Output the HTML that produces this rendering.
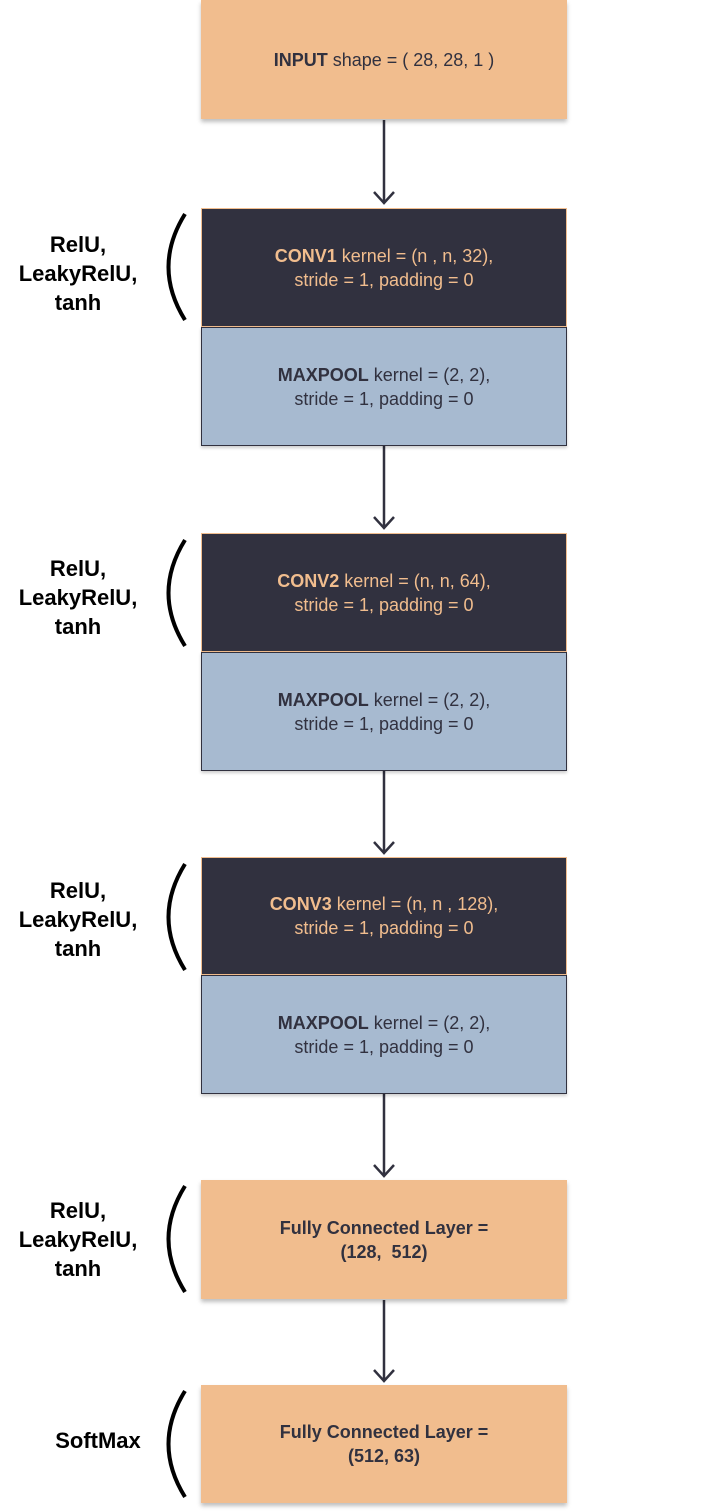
<!DOCTYPE html>
<html><head><meta charset="utf-8"><style>
body{margin:0;width:724px;height:1512px;background:#fff;position:relative;font-family:"Liberation Sans",sans-serif;overflow:hidden}
.b{position:absolute;left:201px;width:366px;display:flex;align-items:center;justify-content:center;text-align:center;font-size:18px;line-height:24px;box-sizing:border-box}
.o{background:#f1bd8e;color:#31313f;box-shadow:0 3px 4px rgba(0,0,0,.25)}
.d{background:#31313f;color:#f1bd8e;border:1px solid #f1bd8e}
.m{background:#a7bad0;color:#31313f;border:1px solid #31313f;box-shadow:0 2px 3px rgba(0,0,0,.2)}
.l{position:absolute;left:0;width:156px;text-align:center;font-weight:bold;font-size:22px;line-height:29px;color:#000}
svg{position:absolute;left:0;top:0}
</style></head><body>
<svg width="724" height="1512">
<g stroke="#31313f" stroke-width="2.5" fill="none">
<path d="M384 120V203M374 192l10 11 10-11"/>
<path d="M384 446V528M374 517l10 11 10-11"/>
<path d="M384 770V853M374 842l10 11 10-11"/>
<path d="M384 1094V1176M374 1165l10 11 10-11"/>
<path d="M384 1300V1381M374 1370l10 11 10-11"/>
</g>
<g stroke="#000" stroke-width="4" fill="none">
<path d="M185 214Q152 267 185 320"/>
<path d="M185 540Q152 593 185 646"/>
<path d="M185 864Q152 917 185 970"/>
<path d="M185 1186Q152 1239 185 1292"/>
<path d="M185 1391Q152 1444 185 1497"/>
</g>
</svg>
<div class="b o" style="top:0;height:119px"><span><b>INPUT</b> shape = ( 28, 28, 1 )</span></div>
<div class="b d" style="top:208px;height:119px"><span><b>CONV1</b> kernel = (n , n, 32),<br>stride = 1, padding = 0</span></div>
<div class="b m" style="top:327px;height:119px"><span><b>MAXPOOL</b> kernel = (2, 2),<br>stride = 1, padding = 0</span></div>
<div class="b d" style="top:533px;height:119px"><span><b>CONV2</b> kernel = (n, n, 64),<br>stride = 1, padding = 0</span></div>
<div class="b m" style="top:652px;height:119px"><span><b>MAXPOOL</b> kernel = (2, 2),<br>stride = 1, padding = 0</span></div>
<div class="b d" style="top:857px;height:118px"><span><b>CONV3</b> kernel = (n, n , 128),<br>stride = 1, padding = 0</span></div>
<div class="b m" style="top:975px;height:119px"><span><b>MAXPOOL</b> kernel = (2, 2),<br>stride = 1, padding = 0</span></div>
<div class="b o" style="top:1180px;height:119px"><b>Fully Connected Layer =<br>(128,&nbsp; 512)</b></div>
<div class="b o" style="top:1385px;height:118px"><b>Fully Connected Layer =<br>(512, 63)</b></div>
<div class="l" style="top:230px">RelU,<br>LeakyRelU,<br>tanh</div>
<div class="l" style="top:554px">RelU,<br>LeakyRelU,<br>tanh</div>
<div class="l" style="top:876px">RelU,<br>LeakyRelU,<br>tanh</div>
<div class="l" style="top:1196px">RelU,<br>LeakyRelU,<br>tanh</div>
<div class="l" style="top:1426px;left:20px;width:156px">SoftMax</div>
</body></html>
